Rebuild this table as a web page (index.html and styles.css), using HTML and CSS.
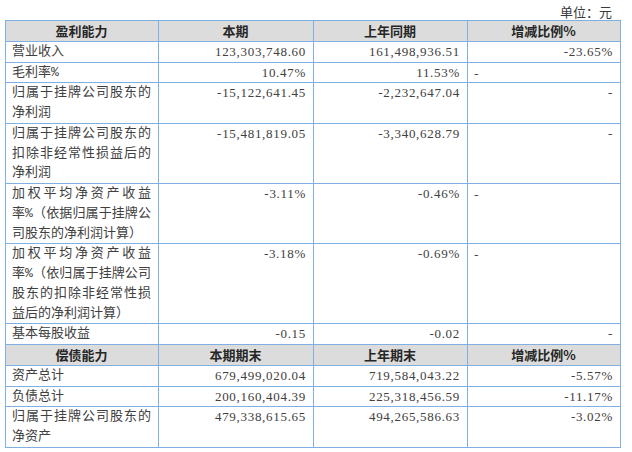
FILE: index.html
```html
<!DOCTYPE html>
<html lang="zh-CN">
<head>
<meta charset="utf-8">
<link rel="stylesheet" href="styles.css">
</head>
<body>
<div class="page">
  <div class="unit">单位：元</div>
  <table class="fin">
    <colgroup>
      <col class="c1"><col class="c2"><col class="c3"><col class="c4">
    </colgroup>
    <tr class="head">
      <th>盈利能力</th><th>本期</th><th>上年同期</th><th>增减比例%</th>
    </tr>
    <tr>
      <td class="label">营业收入</td><td class="num">123,303,748.60</td><td class="num">161,498,936.51</td><td class="num">-23.65%</td>
    </tr>
    <tr>
      <td class="label">毛利率%</td><td class="num">10.47%</td><td class="num">11.53%</td><td class="dash-left">-</td>
    </tr>
    <tr>
      <td class="label">归属于挂牌公司股东的净利润</td><td class="num">-15,122,641.45</td><td class="num">-2,232,647.04</td><td class="num">-</td>
    </tr>
    <tr>
      <td class="label">归属于挂牌公司股东的扣除非经常性损益后的净利润</td><td class="num">-15,481,819.05</td><td class="num">-3,340,628.79</td><td class="num">-</td>
    </tr>
    <tr>
      <td class="label"><span class="ln">加权平均净资产收益</span><span class="ln">率%（依据归属于挂牌公</span><span class="ln last">司股东的净利润计算）</span></td><td class="num">-3.11%</td><td class="num">-0.46%</td><td class="dash-left">-</td>
    </tr>
    <tr>
      <td class="label"><span class="ln">加权平均净资产收益</span><span class="ln">率%（依归属于挂牌公司</span><span class="ln">股东的扣除非经常性损</span><span class="ln last">益后的净利润计算）</span></td><td class="num">-3.18%</td><td class="num">-0.69%</td><td class="dash-left">-</td>
    </tr>
    <tr>
      <td class="label">基本每股收益</td><td class="num">-0.15</td><td class="num">-0.02</td><td class="num">-</td>
    </tr>
    <tr class="head">
      <th>偿债能力</th><th>本期期末</th><th>上年期末</th><th>增减比例%</th>
    </tr>
    <tr>
      <td class="label">资产总计</td><td class="num">679,499,020.04</td><td class="num">719,584,043.22</td><td class="num">-5.57%</td>
    </tr>
    <tr>
      <td class="label">负债总计</td><td class="num">200,160,404.39</td><td class="num">225,318,456.59</td><td class="num">-11.17%</td>
    </tr>
    <tr>
      <td class="label">归属于挂牌公司股东的净资产</td><td class="num">479,338,615.65</td><td class="num">494,265,586.63</td><td class="num">-3.02%</td>
    </tr>
  </table>
</div>
</body>
</html>
```

FILE: styles.css
```css
html, body {
  margin: 0;
  padding: 0;
  background: #ffffff;
}

.page {
  padding-left: 5px;
  width: 615px;
  font-family: "Noto Sans CJK SC", sans-serif;
  font-size: 13px;
  color: #3a3a3a;
}

.unit {
  height: 20px;
  box-sizing: border-box;
  padding-top: 3px;
  padding-right: 8px;
  line-height: 17px;
  text-align: right;
}

.fin {
  width: 615px;
  border-collapse: collapse;
  table-layout: fixed;
}

.c1 { width: 153px; }
.c2 { width: 155px; }
.c3 { width: 154px; }
.c4 { width: 153px; }

.fin th,
.fin td {
  border: 1px solid #80b0e2;
  padding: 0 7px 0 6px;
  line-height: 19.75px;
  vertical-align: top;
}

.head th {
  background: #dcdcdc;
  font-weight: 700;
  color: #262626;
  text-align: center;
}

.label {
  font-family: "Liberation Mono", "Noto Sans CJK SC", monospace;
  text-align: justify;
  color: #404040;
}

.ln {
  display: block;
  white-space: nowrap;
  text-align: justify;
  text-align-last: justify;
}

.ln.last {
  text-align-last: auto;
}

.num {
  font-family: "Liberation Serif", "Noto Sans CJK SC", serif;
  text-align: right;
  letter-spacing: 0.7px;
  color: #404040;
}

.dash-left {
  text-align: left;
  color: #404040;
}
```
